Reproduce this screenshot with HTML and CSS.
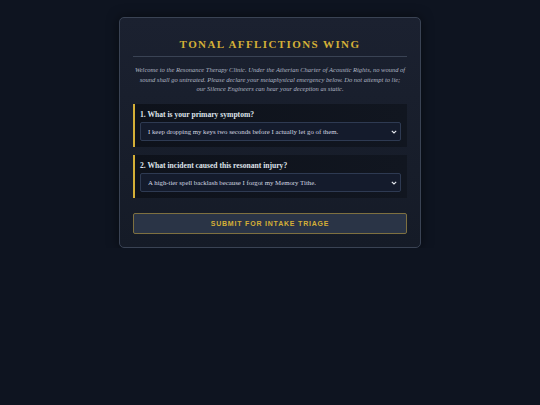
FILE: index.html
```html
<!DOCTYPE html>
<html lang="en">
<head>
    <meta charset="UTF-8">
    <meta name="viewport" content="width=device-width, initial-scale=1.0">
    <title>Tonal Afflictions Wing</title>
    <link rel="stylesheet" href="styles.css">
</head>
<body>

<div class="clinica">
    <h1>Tonal Afflictions Wing</h1>
    <p class="intro">Welcome to the Resonance Therapy Clinic. Under the Atherian Charter of Acoustic Rights, no wound of sound shall go untreated. Please declare your metaphysical emergency below. Do not attempt to lie; our Silence Engineers can hear your deception as static.</p>

    <!-- Preguntas de admisión -->
    <div class="pregunta">
        <label for="sintoma">1. What is your primary symptom?</label>
        <div class="campo">
            <select id="sintoma" class="selector">
                <option>I keep dropping my keys two seconds before I actually let go of them.</option>
                <option>Every door I open hums a minor chord.</option>
                <option>My echo answers before I speak.</option>
            </select>
            <svg class="flecha" viewBox="0 0 6 4" width="6" height="4"><path d="M0.8 0.8 L3 3 L5.2 0.8" fill="none" stroke="#e6e9ef" stroke-width="1.1"/></svg>
        </div>
    </div>

    <div class="pregunta">
        <label for="incidente">2. What incident caused this resonant injury?</label>
        <div class="campo">
            <select id="incidente" class="selector">
                <option>A high-tier spell backlash because I forgot my Memory Tithe.</option>
                <option>I whistled in a cathedral of glass.</option>
                <option>Prolonged exposure to a tuning fork of unknown origin.</option>
            </select>
            <svg class="flecha" viewBox="0 0 6 4" width="6" height="4"><path d="M0.8 0.8 L3 3 L5.2 0.8" fill="none" stroke="#e6e9ef" stroke-width="1.1"/></svg>
        </div>
    </div>

    <button class="boton-enviar">Submit for Intake Triage</button>
</div>

</body>
</html>
```

FILE: styles.css
```css
body {
    font-family: "Liberation Serif", serif;
    background-color: #0e1420;
    color: #c6cbd6;
    margin: 0;
}

.clinica {
    width: 274px;
    margin: 17px auto 0;
    padding: 13px;
    background: linear-gradient(#1b2130, #151b27);
    border: 1px solid #3a4354;
    border-radius: 5px;
    box-shadow: 0px 0px 12px rgba(0, 0, 0, 0.5);
}

h1 {
    color: #d4af37;
    font-size: 11px;
    line-height: 13px;
    letter-spacing: 1.4px;
    text-transform: uppercase;
    text-align: center;
    margin: 7px 0 0;
    padding-bottom: 5px;
    border-bottom: 1px solid #3a4354;
}

.intro {
    font-size: 6.5px;
    line-height: 9.5px;
    font-style: italic;
    text-align: center;
    color: #aeb5c2;
    margin: 8px 0 10px;
    padding: 0 1.5px;
}

.pregunta {
    background: linear-gradient(90deg, #0e121b, #111620);
    border-left: 2px solid #d4af37;
    padding: 6px 6px 6px 5px;
    margin-bottom: 8px;
}

.pregunta label {
    display: block;
    font-size: 7.6px;
    line-height: 9px;
    font-weight: bold;
    color: #dfe3ea;
    margin-bottom: 3px;
}

.campo {
    position: relative;
}

.selector {
    display: block;
    width: 100%;
    height: 19px;
    appearance: none;
    font-family: "Liberation Serif", serif;
    font-size: 6.8px;
    color: #d3d8e0;
    background-color: #141b2c;
    border: 1px solid #2e3a52;
    border-radius: 2px;
    padding: 0 12px 0 7px;
}

/* flecha del desplegable */
.flecha {
    position: absolute;
    right: 4px;
    top: 8px;
    pointer-events: none;
}

.boton-enviar {
    display: block;
    width: 100%;
    height: 21px;
    margin-top: 15px;
    background-color: #2a3446;
    color: #d4af37;
    border: 1px solid #7e7040;
    border-radius: 2px;
    font-family: "Liberation Sans", Arial, sans-serif;
    font-size: 7px;
    font-weight: bold;
    letter-spacing: 0.8px;
    text-transform: uppercase;
    cursor: pointer;
}

.boton-enviar:hover {
    background-color: #344055;
}
```
